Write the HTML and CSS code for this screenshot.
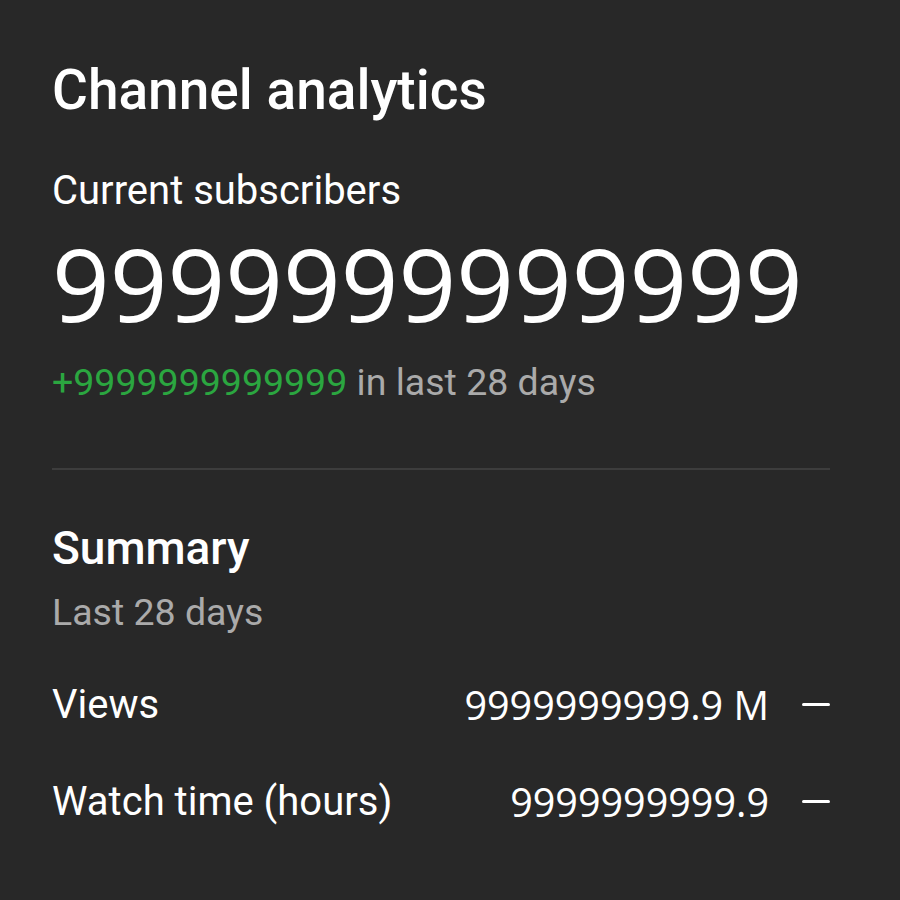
FILE: index.html
```html
<!DOCTYPE html>
<html lang="en">
<head>
  <meta charset="UTF-8">
  <meta name="viewport" content="width=device-width, initial-scale=1.0">
  <title>Channel analytics</title>
  <link rel="stylesheet" href="styles.css">
</head>
<body>
  <div class="card">
    <h1 class="card-title">Channel analytics</h1>

    <div class="subscribers">
      <div class="label">Current subscribers</div>
      <div class="big-number">9999999999999</div>
      <div class="change">
        <span class="positive">+9999999999999</span> in last 28 days
      </div>
    </div>

    <div class="divider"></div>

    <div class="summary">
      <h2 class="summary-title">Summary</h2>
      <div class="summary-sub">Last 28 days</div>

      <div class="metrics">
        <div class="metric">
          <span class="metric-name">Views</span>
          <span class="metric-value">9999999999.9 M</span>
          <span class="trend"></span>
        </div>

        <div class="metric">
          <span class="metric-name">Watch time (hours)</span>
          <span class="metric-value">9999999999.9</span>
          <span class="trend"></span>
        </div>
      </div>
    </div>
  </div>
</body>
</html>
```

FILE: styles.css
```css
html,
body {
  margin: 0;
  background-color: #282828;
}

body {
  font-family: Roboto, 'Liberation Sans', Arial, sans-serif;
  color: #fff;
}

.card {
  width: 778px;
  padding: 58px 0 0 52px;
}

.card-title {
  margin: 0;
  font-size: 55px;
  font-weight: 500;
  line-height: 64px;
}

.subscribers {
  margin-top: 46px;
}

.label {
  font-size: 40px;
  line-height: 46px;
}

.big-number {
  font-family: 'Open Sans', 'Noto Sans', sans-serif;
  font-size: 101px;
  line-height: 138px;
}

.change {
  font-size: 37.5px;
  line-height: 48px;
  color: #aaa;
  margin-top: 6px;
}

.positive {
  color: #2ba640;
}

.divider {
  height: 2px;
  background-color: #3d3d3d;
  margin-top: 62px;
}

.summary {
  margin-top: 50px;
}

.summary-title {
  margin: 0;
  font-size: 46px;
  font-weight: 500;
  line-height: 56px;
}

.summary-sub {
  font-size: 37.5px;
  line-height: 48px;
  color: #aaa;
  margin-top: 12px;
}

.metrics {
  margin-top: 20px;
}

.metric {
  display: flex;
  align-items: center;
  height: 97px;
}

.metric-name {
  flex: 1;
  font-size: 40px;
}

.metric-value {
  font-family: 'Open Sans', 'Noto Sans', sans-serif;
  font-size: 39.5px;
}

/* flat trend marker */
.trend {
  width: 28px;
  height: 3px;
  margin-left: 33px;
  background-color: #fff;
  border-radius: 2px;
}
```
